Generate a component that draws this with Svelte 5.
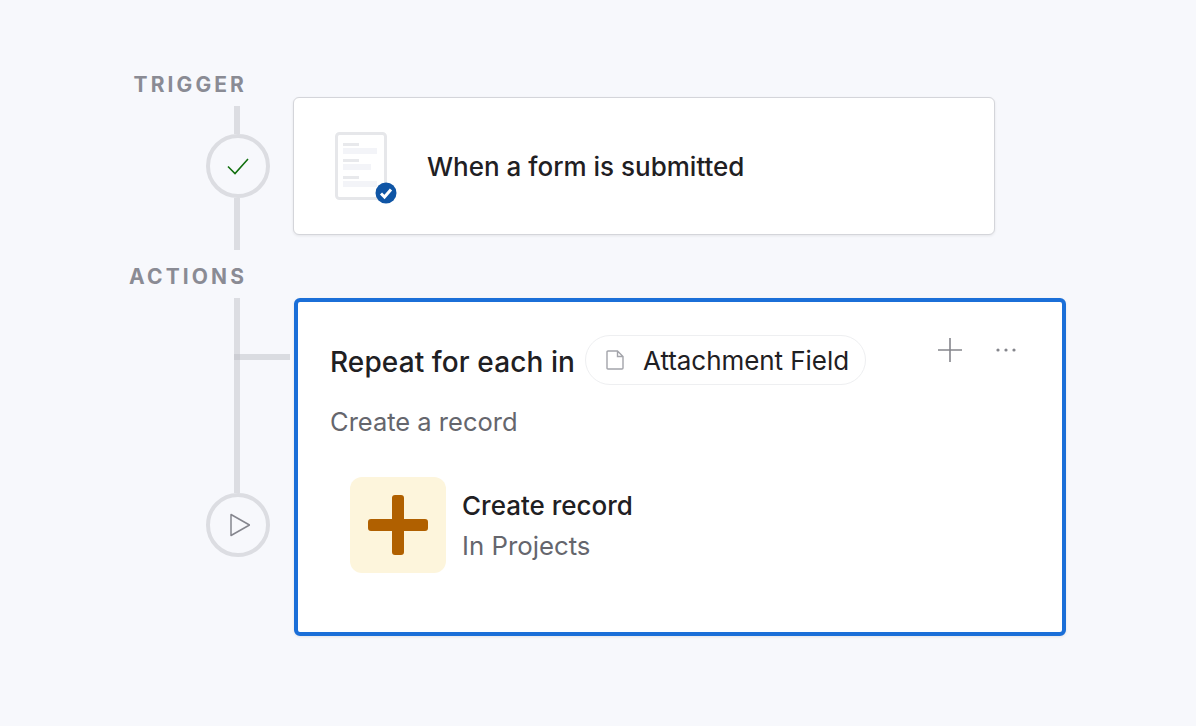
<script>
	const steps = {
		trigger: 'When a form is submitted',
		repeat: 'Repeat for each in',
		field: 'Attachment Field',
		subtitle: 'Create a record',
		action: 'Create record',
		table: 'In Projects'
	}
</script>

<main class="flow">
	<section class="stage trigger">
		<div class="side">
			<h2>TRIGGER</h2>
			<div class="rail top"></div>
			<div class="node">
				<svg width="24" height="24" viewBox="0 0 24 24" fill="none">
					<path d="M2 12.5 L9 19.5 L22 5" stroke="#12700f" stroke-width="1.6" />
				</svg>
			</div>
			<div class="rail bottom"></div>
		</div>
		<div class="card">
			<svg class="form-icon" width="66" height="76" viewBox="0 0 66 76" fill="none">
				<rect x="2.5" y="2.5" width="49" height="65" rx="3" stroke="#e6e7ea" stroke-width="3" />
				<rect x="9" y="12" width="16" height="3" fill="#e8e9ec" />
				<rect x="9" y="17" width="34" height="6" fill="#f3f4f8" />
				<rect x="9" y="28" width="16" height="3" fill="#e8e9ec" />
				<rect x="9" y="33" width="28" height="6" fill="#f3f4f8" />
				<rect x="9" y="45" width="16" height="3" fill="#e8e9ec" />
				<rect x="9" y="50" width="34" height="6" fill="#f3f4f8" />
				<circle cx="52" cy="62" r="10.5" fill="#0f55a5" />
				<path d="M47 62.5 L50.5 66 L57 58.5" stroke="#fff" stroke-width="3" />
			</svg>
			<span class="trigger-title">{steps.trigger}</span>
		</div>
	</section>

	<section class="stage actions">
		<div class="side">
			<h2>ACTIONS</h2>
			<div class="rail long">
				<div class="branch"></div>
			</div>
			<div class="node">
				<svg width="24" height="24" viewBox="0 0 24 24" fill="none">
					<path d="M5 1.5 V22.5 L23.5 12 Z" stroke="#85868e" stroke-width="1.5" stroke-linejoin="round" />
				</svg>
			</div>
		</div>
		<div class="card selected">
			<div class="head">
				<div class="title-row">
					<span class="repeat">{steps.repeat}</span>
					<span class="pill">
						<svg width="18" height="20" viewBox="0 0 18 20" fill="none">
							<path d="M1 2 Q1 1 2 1 H11.5 L17 6.5 V18 Q17 19 16 19 H2 Q1 19 1 18 Z M11.5 1 V6.5 H17" stroke="#a3a4aa" stroke-width="1.4" />
						</svg>
						{steps.field}
					</span>
				</div>
				<div class="tools">
					<svg width="24" height="24" viewBox="0 0 24 24" fill="none">
						<path d="M12 0 V24 M0 12 H24" stroke="#85868c" stroke-width="1.6" />
					</svg>
					<svg width="22" height="6" viewBox="0 0 22 6" fill="#85868c">
						<circle cx="3" cy="3" r="1.6" />
						<circle cx="11" cy="3" r="1.6" />
						<circle cx="19" cy="3" r="1.6" />
					</svg>
				</div>
			</div>
			<p class="subtitle">{steps.subtitle}</p>
			<div class="action">
				<div class="tile">
					<svg width="60" height="60" viewBox="0 0 60 60">
						<path d="M24 3 Q24 0 27 0 H33 Q36 0 36 3 V24 H57 Q60 24 60 27 V33 Q60 36 57 36 H36 V57 Q36 60 33 60 H27 Q24 60 24 57 V36 H3 Q0 36 0 33 V27 Q0 24 3 24 H24 Z" fill="#b06000" />
					</svg>
				</div>
				<div class="action-text">
					<strong>{steps.action}</strong>
					<span>{steps.table}</span>
				</div>
			</div>
		</div>
	</section>
</main>

<style>
:global(body) {
	background: #f7f8fc;
	font-family: Inter, "Liberation Sans", sans-serif;
	color: #1f2023;
}

.flow {
	box-sizing: border-box;
	height: 726px;
	padding-top: 73px;
}

.stage {
	display: grid;
	grid-template-columns: 270px auto;
	justify-content: start;
}

.trigger {
	column-gap: 23px;
	margin-bottom: 15px;
}

.actions {
	column-gap: 24px;
}

.side {
	display: flex;
	flex-direction: column;
	align-items: flex-start;
}

h2 {
	align-self: stretch;
	margin: 0 0 10px;
	padding: 1px 22px 0 0;
	font-size: 21px;
	line-height: 22px;
	font-weight: 700;
	letter-spacing: 3.1px;
	text-align: right;
	color: #8a8b94;
	transform: translateX(-1px);
}

.rail {
	width: 6px;
	margin-left: 234px;
	background: #dcdde2;
}

.top { height: 28px; }
.bottom { height: 52px; }

.long {
	height: 195px;
	position: relative;
}

.branch {
	position: absolute;
	left: 0;
	top: 56px;
	width: 56px;
	height: 6px;
	background: rgba(190, 191, 198, 0.5);
}

.node {
	box-sizing: border-box;
	display: flex;
	align-items: center;
	justify-content: center;
	width: 64px;
	height: 64px;
	margin-left: 206px;
	border: 4px solid #dcdde2;
	border-radius: 50%;
	background: #f7f8fc;
}

.card {
	box-sizing: border-box;
	display: flex;
	align-items: center;
	width: 702px;
	height: 138px;
	margin-top: 24px;
	padding-left: 41px;
	background: #fff;
	border: 1px solid #d4d5da;
	border-radius: 6px;
	box-shadow: 0 1px 3px rgba(0, 0, 0, 0.08);
}

.form-icon {
	margin: 5px 0 0 -1px;
}

.trigger-title {
	margin-left: 27px;
	font-size: 26px;
	font-weight: 500;
}

.selected {
	display: block;
	width: 772px;
	height: 338px;
	margin-top: 33px;
	padding: 33px 34px 0 32px;
	border: 4px solid #1b6fd8;
}

.head {
	display: flex;
	justify-content: space-between;
	align-items: flex-start;
}

.title-row {
	display: flex;
	align-items: center;
	gap: 10px;
}

.repeat {
	font-size: 28px;
	font-weight: 500;
	letter-spacing: 0.1px;
	padding-top: 3px;
}

.pill {
	box-sizing: border-box;
	display: flex;
	align-items: center;
	gap: 19px;
	height: 50px;
	padding: 0 16px 0 20px;
	border: 1px solid #eeeff1;
	border-radius: 25px;
	font-size: 26px;
	letter-spacing: -0.05px;
	font-weight: 400;
}

.tools {
	display: flex;
	align-items: center;
	gap: 33px;
	margin: 3px 11px 0 0;
}

.subtitle {
	margin: 19px 0 0;
	font-size: 25.5px;
	line-height: 36px;
	color: #65666d;
}

.action {
	display: flex;
	gap: 16px;
	margin: 37px 0 0 20px;
}

.tile {
	display: flex;
	align-items: center;
	justify-content: center;
	width: 96px;
	height: 96px;
	background: #fdf5dc;
	border-radius: 12px;
}

.action-text {
	display: flex;
	flex-direction: column;
	gap: 4px;
	padding-top: 11px;
	font-size: 26px;
	line-height: 36px;
}

.action-text strong {
	font-weight: 500;
}

.action-text span {
	color: #65666d;
	font-size: 25.8px;
}
</style>
